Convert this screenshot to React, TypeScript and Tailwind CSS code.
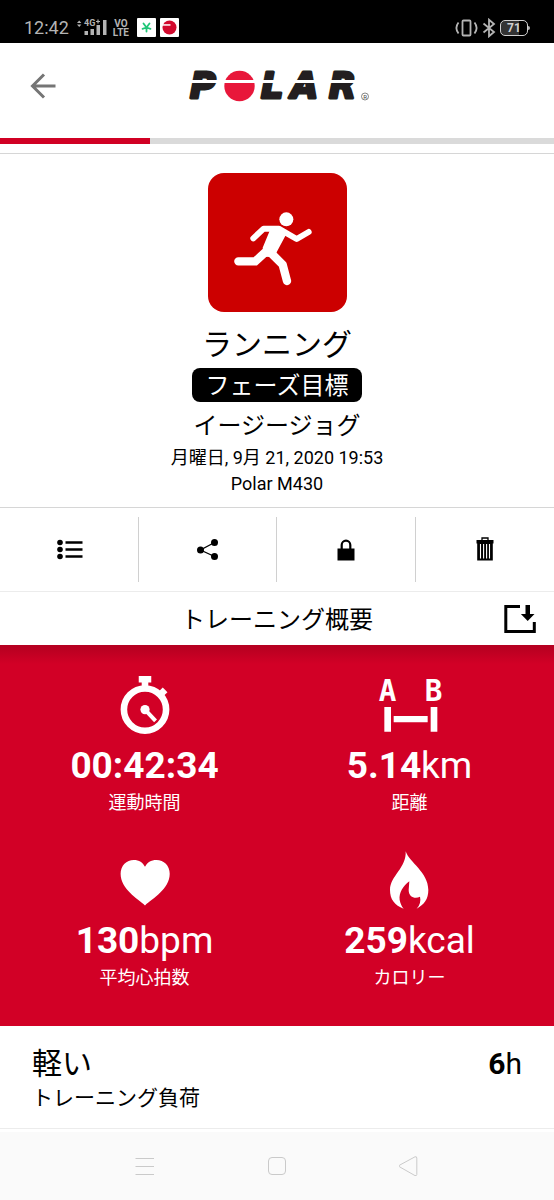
import React from 'react';

const TimerIcon = () => (
  <svg viewBox="196 47 176 176" className="size-[58px]" aria-hidden="true">
    <path d="M265 47h38v20h-9v12h-20V67h-9z" fill="white" />
    <circle cx="284" cy="149" r="64" fill="none" stroke="white" strokeWidth="20" />
    <path d="M328 106l17-17" stroke="white" strokeWidth="20" />
    <circle cx="284" cy="149" r="14" fill="white" />
    <path d="M284 149l32 34" stroke="white" strokeWidth="12" />
  </svg>
);

const DistanceIcon = () => (
  <svg viewBox="181 47 174 174" className="size-[58px] overflow-visible" aria-hidden="true">
    <g fill="white" fontFamily="'DejaVu Sans Mono', monospace" fontWeight="700" fontSize="88" textAnchor="middle">
      <text x="201" y="121">A</text>
      <text x="339" y="121">B</text>
    </g>
    <path d="M191 140h20v74h-20zM330 140h20v74h-20zM219 167h102v19H219z" fill="white" />
  </svg>
);

const HeartIcon = () => (
  <svg viewBox="196 33 176 176" className="size-[58px]" aria-hidden="true">
    <path
      d="M284 198C262 178 210 148 210 102C210 77 228 60 250 60C266 60 278 68 284 81C290 68 302 60 319 60C341 60 359 77 359 102C359 148 306 178 284 198Z"
      fill="white"
    />
  </svg>
);

const FlameIcon = () => (
  <svg viewBox="181 33 174 174" className="size-[58px]" aria-hidden="true">
    <path
      d="M255 34C266 68 323 96 323 150C323 178 310 194 288 206C298 195 301 182 298 170C284 178 264 172 264 150L266 124C248 138 234 158 237 180C239 190 243 200 249 206C222 196 208 178 208 150C208 108 258 84 255 34Z"
      fill="white"
    />
  </svg>
);

const stats = [
  { label: '運動時間', value: '00:42:34', unit: '', icon: TimerIcon },
  { label: '距離', value: '5.14', unit: 'km', icon: DistanceIcon },
  { label: '平均心拍数', value: '130', unit: 'bpm', icon: HeartIcon },
  { label: 'カロリー', value: '259', unit: 'kcal', icon: FlameIcon },
];

const actions = [
  {
    label: 'リスト',
    icon: (
      <svg viewBox="0 0 28 28" className="size-7" aria-hidden="true">
        <circle cx="5" cy="6.500" r="2.800" />
        <circle cx="5" cy="13.500" r="2.800" />
        <circle cx="5" cy="20.500" r="2.800" />
        <path d="M10.500 5.200h17v2.600h-17zM10.500 12.200h17v2.600h-17zM10.500 19.200h17v2.600h-17z" />
      </svg>
    ),
  },
  {
    label: '共有',
    icon: (
      <svg viewBox="0 0 28 28" className="size-7" aria-hidden="true">
        <path d="M21.500 6.500L7.500 14L21.500 20.500" fill="none" stroke="black" strokeWidth="1.300" />
        <circle cx="7.500" cy="14" r="3.500" />
        <circle cx="21.500" cy="6.500" r="3.500" />
        <circle cx="21.500" cy="20.500" r="3.500" />
      </svg>
    ),
  },
  {
    label: 'ロック',
    icon: (
      <svg viewBox="0 0 28 28" className="size-7" aria-hidden="true">
        <path d="M5.500 12.500h17v12h-17z" />
        <path d="M9.700 13V9a4.300 4.300 0 0 1 8.600 0V13" fill="none" stroke="black" strokeWidth="2.200" />
      </svg>
    ),
  },
  {
    label: '削除',
    icon: (
      <svg viewBox="0 0 28 28" className="size-7" aria-hidden="true">
        <path d="M11 4.500V2h6v2.500" fill="none" stroke="black" strokeWidth="1.300" />
        <path d="M5.500 4h17v3.500h-17z" />
        <path d="M6.200 7h15.600v17.500H6.200z" />
        <path d="M9.500 8v14.500M12.600 8v14.500M15.600 8v14.500M18.500 8v14.500" stroke="white" strokeWidth="1.100" />
      </svg>
    ),
  },
];

const StatusBar = () => (
  <div className="flex h-[43px] items-center justify-between bg-black px-6 pt-3 text-[#b4b4b4]">
    <div className="flex items-center gap-2">
      <span className="text-lg leading-6">12:42</span>
      <div className="flex items-center gap-1.5">
        <svg viewBox="0 0 30 18" className="h-[18px] w-[30px] overflow-visible" fill="currentColor" aria-hidden="true">
          <path d="M0 4l2.200-2.600L4.400 4zM0 5.400h4.400L2.200 8z" />
          <text x="7" y="7" fontSize="9" fontWeight="700">4G</text>
          <path d="M19 2.500h4M21 .5v4" stroke="currentColor" strokeWidth="1.200" />
          <path d="M7.500 12H11v4H7.500zM13.500 10H17v6h-3.500zM19.500 6H23v10h-3.500zM26 1h3.500v15H26z" />
        </svg>
        <div className="text-center text-[10px] leading-[9px] font-bold">
          VO
          <br />
          LTE
        </div>
      </div>
      <div className="flex gap-1">
        <svg viewBox="0 0 19 19" className="size-[19px]" aria-hidden="true">
          <rect width="19" height="19" rx="1" fill="white" />
          <g stroke="#1fc677" strokeWidth="1.800" strokeLinecap="round">
            <path d="M9.500 9.500V13.500M9.500 9.500L5.500 10.800M9.500 9.500L6.500 5.500M9.500 9.500L12.500 5.500M9.500 9.500L13.500 10.800" />
          </g>
        </svg>
        <svg viewBox="0 0 19 19" className="size-[19px]" aria-hidden="true">
          <rect width="19" height="19" rx="1" fill="white" />
          <circle cx="9.500" cy="9.500" r="7" fill="#d20a2e" />
          <path d="M2 6.200h8.500v1.500H2z" fill="white" />
        </svg>
      </div>
    </div>
    <div className="flex items-center gap-1">
      <svg viewBox="0 0 23 18" className="h-[18px] w-[23px]" fill="none" stroke="currentColor" strokeWidth="1.800" aria-hidden="true">
        <rect x="7.500" y="1.500" width="8" height="15" rx="1" />
        <path d="M3.500 3.500C.8 7 .8 11 3.500 14.500M19.500 3.500C22.200 7 22.200 11 19.500 14.500" />
      </svg>
      <svg viewBox="0 0 14 20" className="h-5 w-[14px]" fill="none" stroke="currentColor" strokeWidth="1.800" aria-hidden="true">
        <path d="M1.500 5.500L12 14L7 18.300V1.700L12 6L1.500 14.500" />
      </svg>
      <div className="flex items-center">
        <span className="flex h-4 w-7 items-center justify-center rounded-[5px] border border-current bg-gradient-to-r from-[#333] from-70% to-black to-70% text-xs leading-4 font-bold text-[#d0d0d0]">
          71
        </span>
        <span className="h-1 w-0.5 rounded-r bg-current" />
      </div>
    </div>
  </div>
);

const PolarLogo = () => (
  <svg viewBox="0 0 186 34" className="h-[34px] w-[186px] overflow-visible" role="img" aria-label="Polar">
    <g
      fill="#231f20"
      stroke="#231f20"
      strokeWidth="3"
      strokeLinejoin="round"
      fontFamily="'DejaVu Sans', sans-serif"
      fontWeight="700"
      fontStyle="italic"
      fontSize="35"
    >
      <text x="6" y="28.500">P</text>
      <text x="77" y="28.500">L</text>
      <text x="107" y="28.500">A</text>
      <text x="145" y="28.500">R</text>
    </g>
    <circle cx="55.500" cy="17" r="15.200" fill="#e8173a" />
    <path d="M0 11h177v3H0z" fill="white" />
    <circle cx="181" cy="27.500" r="3.500" fill="none" stroke="#555" strokeWidth=".7" />
    <text x="181" y="29.500" fontSize="6" textAnchor="middle" fill="#444">R</text>
  </svg>
);

const RunnerTile = () => (
  <div className="size-[139px] rounded-2xl bg-[#cc0000]">
    <svg viewBox="23 23 417 417" className="size-full" fill="none" stroke="white" strokeLinecap="round" strokeLinejoin="round" aria-hidden="true">
      <circle cx="258" cy="162" r="21" fill="white" stroke="none" />
      <path d="M159 219L190 190H235L289 221L325 200" strokeWidth="18" />
      <path d="M210 192L236 182L258 206L228 262L236 276L192 274L187 247Z" fill="white" stroke="none" />
      <path d="M114 288H165L200 256" strokeWidth="25" strokeLinejoin="miter" />
      <path d="M212 263L247 298L260 347" strokeWidth="25" />
    </svg>
  </div>
);

const App = () => {
  return (
    <div className="min-h-screen bg-white font-[Roboto,'Noto_Sans_CJK_JP',sans-serif] text-black">
      <StatusBar />

      <header className="grid h-[95px] grid-cols-[1fr_auto_1fr] items-start px-7 pt-[26px]">
        <button aria-label="戻る" className="flex h-[34px] w-8 items-center">
          <svg viewBox="0 0 30 30" className="size-[30px]" fill="none" stroke="#757575" strokeWidth="3" aria-hidden="true">
            <path d="M27.500 15H5M16 3.500L4.500 15L16 26.500" />
          </svg>
        </button>
        <PolarLogo />
      </header>
      <div className="h-1.5 bg-[#dadada]">
        <div className="h-full w-[27%] bg-[#d10024]" />
      </div>

      <section className="mt-[9px] flex flex-col items-center border-y border-[#d6d6d6] pt-[19px] pb-[11px]">
        <RunnerTile />
        <h1 className="mt-[13px] text-[30px] leading-10">ランニング</h1>
        <span className="mt-[3px] rounded-lg bg-black px-[14px] pt-0.5 text-2xl leading-8 text-white">フェーズ目標</span>
        <p className="mt-[9px] text-2xl leading-[30px]">イージージョグ</p>
        <p className="mt-1 text-lg leading-[26px]">月曜日, 9月 21, 2020 19:53</p>
        <p className="text-lg leading-[25px]">Polar M430</p>
      </section>

      <div className="grid grid-cols-4 divide-x divide-[#d0d0d0] py-[9px]">
        {actions.map(action => (
          <button key={action.label} aria-label={action.label} className="flex h-[65px] items-center justify-center">
            {action.icon}
          </button>
        ))}
      </div>

      <div className="grid h-[54px] grid-cols-[1fr_auto_1fr] items-center border-t border-[#ececec] px-[18px]">
        <h2 className="col-start-2 pt-0.5 text-2xl leading-8">トレーニング概要</h2>
        <button aria-label="ダウンロード" className="justify-self-end">
          <svg viewBox="0 0 32 28" className="h-7 w-8" fill="none" stroke="black" strokeWidth="3" aria-hidden="true">
            <path d="M16 1.500H1.800v25h28.500V17" />
            <path d="M21.500 0h4.500v9h4.500l-6.800 7l-6.800-7h4.600z" fill="black" stroke="none" />
          </svg>
        </button>
      </div>

      <section className="bg-[#d20026] bg-linear-to-b from-[#b40020] to-[#d20026] to-5% px-3 pt-[31px] pb-9 text-white">
        <div className="grid grid-cols-2 gap-y-9">
          {stats.map(stat => (
            <div key={stat.label} className="flex flex-col items-center">
              <stat.icon />
              <div className="mt-3 text-[37px] leading-10">
                <span className="font-bold">{stat.value}</span>
                <span>{stat.unit}</span>
              </div>
              <div className="mt-[5px] text-lg leading-6">{stat.label}</div>
            </div>
          ))}
        </div>
      </section>

      <section className="flex items-start justify-between border-b border-[#ececec] px-8 pt-[18px] pb-4">
        <div>
          <div className="text-[30px] leading-10">軽い</div>
          <div className="text-[21px] leading-7">トレーニング負荷</div>
        </div>
        <div className="text-[30px] leading-10">
          <span className="font-bold">6</span>
          <span>h</span>
        </div>
      </section>

      <nav className="mt-[3px] flex h-[68px] items-center justify-center gap-28 bg-[#fafafa]">
        <button aria-label="メニュー">
          <svg viewBox="0 0 20 20" className="size-5" fill="none" stroke="#cacaca" aria-hidden="true">
            <path d="M.5 2.500h18.500M.5 10.500h18.500M.5 18.500h18.500" />
          </svg>
        </button>
        <button aria-label="ホーム">
          <svg viewBox="0 0 20 20" className="size-5" fill="none" stroke="#cacaca" aria-hidden="true">
            <rect x="1.500" y="1.500" width="17" height="17" rx="3.500" />
          </svg>
        </button>
        <button aria-label="前へ">
          <svg viewBox="0 0 20 20" className="size-5" fill="none" stroke="#cacaca" strokeLinejoin="round" aria-hidden="true">
            <path d="M16 .8L.5 9.200Q-.4 10 .5 10.800L16 19.600Q17.800 20 17.800 18.500V2Q17.800 .3 16 .8Z" />
          </svg>
        </button>
      </nav>
    </div>
  );
};

export default App;
